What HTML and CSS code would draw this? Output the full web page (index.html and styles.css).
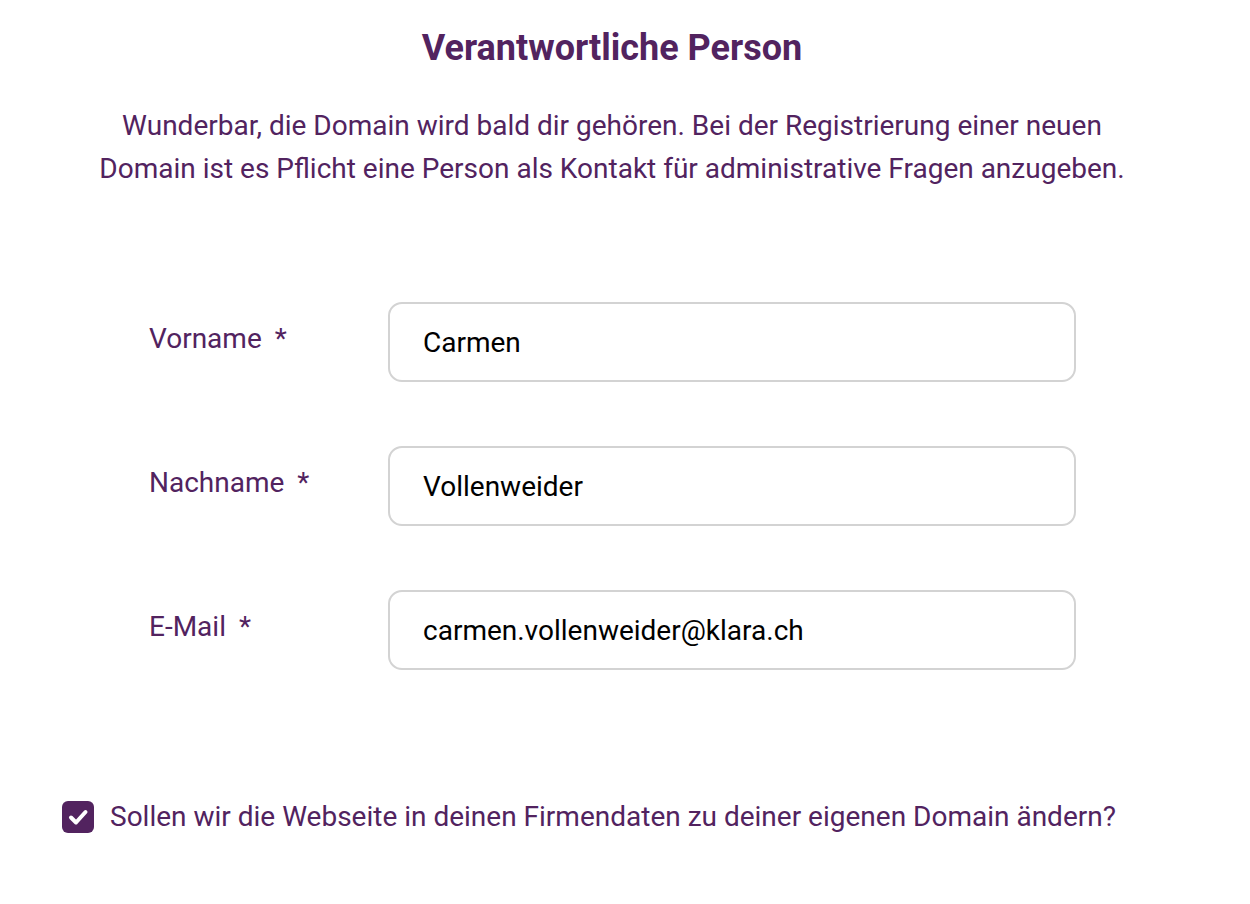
FILE: index.html
```html
<!DOCTYPE html>
<html lang="de">
<head>
  <meta charset="UTF-8" />
  <meta name="viewport" content="width=device-width, initial-scale=1.0"/>
  <title>Verantwortliche Person</title>
  <link rel="stylesheet" href="styles.css">
</head>
<body>
  <div class="contact-container">
    <h2>Verantwortliche Person</h2>
    <p class="intro">
      Wunderbar, die Domain wird bald dir gehören. Bei der Registrierung einer neuen<br>
      Domain ist es Pflicht eine Person als Kontakt für administrative Fragen anzugeben.
    </p>

    <form id="contactForm" class="contact-form">
      <label for="firstname">Vorname <span class="req">*</span></label>
      <input type="text" id="firstname" name="firstname" value="Carmen" required />

      <label for="lastname">Nachname <span class="req">*</span></label>
      <input type="text" id="lastname" name="lastname" value="Vollenweider" required />

      <label for="email">E-Mail <span class="req">*</span></label>
      <input type="email" id="email" name="email" value="carmen.vollenweider@klara.ch" required />
    </form>

    <label class="check-row">
      <span class="check-box">
        <svg viewBox="0 0 32 32" width="32" height="32">
          <rect x="0" y="0" width="32" height="32" rx="6" fill="#52235f"/>
          <path d="M9 16.5 L14 21.5 L23.5 11" fill="none" stroke="#fff" stroke-width="4" stroke-linecap="round" stroke-linejoin="round"/>
        </svg>
      </span>
      <span>Sollen wir die Webseite in deinen Firmendaten zu deiner eigenen Domain ändern?</span>
    </label>
  </div>
</body>
</html>
```

FILE: styles.css
```css
body {
  font-family: Roboto, 'Noto Sans', sans-serif;
  background-color: #ffffff;
  color: #52235f;
  margin: 0;
}

.contact-container {
  width: 1224px;
  padding-top: 26px;
}

h2 {
  text-align: center;
  font-size: 36px;
  font-weight: 700;
  margin: 0;
  line-height: 44px;
}

.intro {
  text-align: center;
  font-size: 28px;
  line-height: 43px;
  margin: 34px 0 0;
}

.contact-form {
  display: grid;
  grid-template-columns: 239px 688px;
  row-gap: 64px;
  margin: 112px 0 0 149px;
  align-items: start;
}

.contact-form label {
  font-size: 28px;
  padding-top: 21px;
  line-height: 32px;
}

.req {
  margin-left: 6px;
}

input {
  box-sizing: border-box;
  width: 100%;
  height: 80px;
  padding: 0 33px;
  border: 2px solid #d3d3d3;
  border-radius: 14px;
  font-family: Roboto, sans-serif;
  font-size: 28px;
  color: #000;
  background: #fff;
}

.check-row {
  display: flex;
  align-items: center;
  gap: 16px;
  margin: 130px 0 0 62px;
  font-size: 28px;
}

.check-box {
  display: flex;
}
```
